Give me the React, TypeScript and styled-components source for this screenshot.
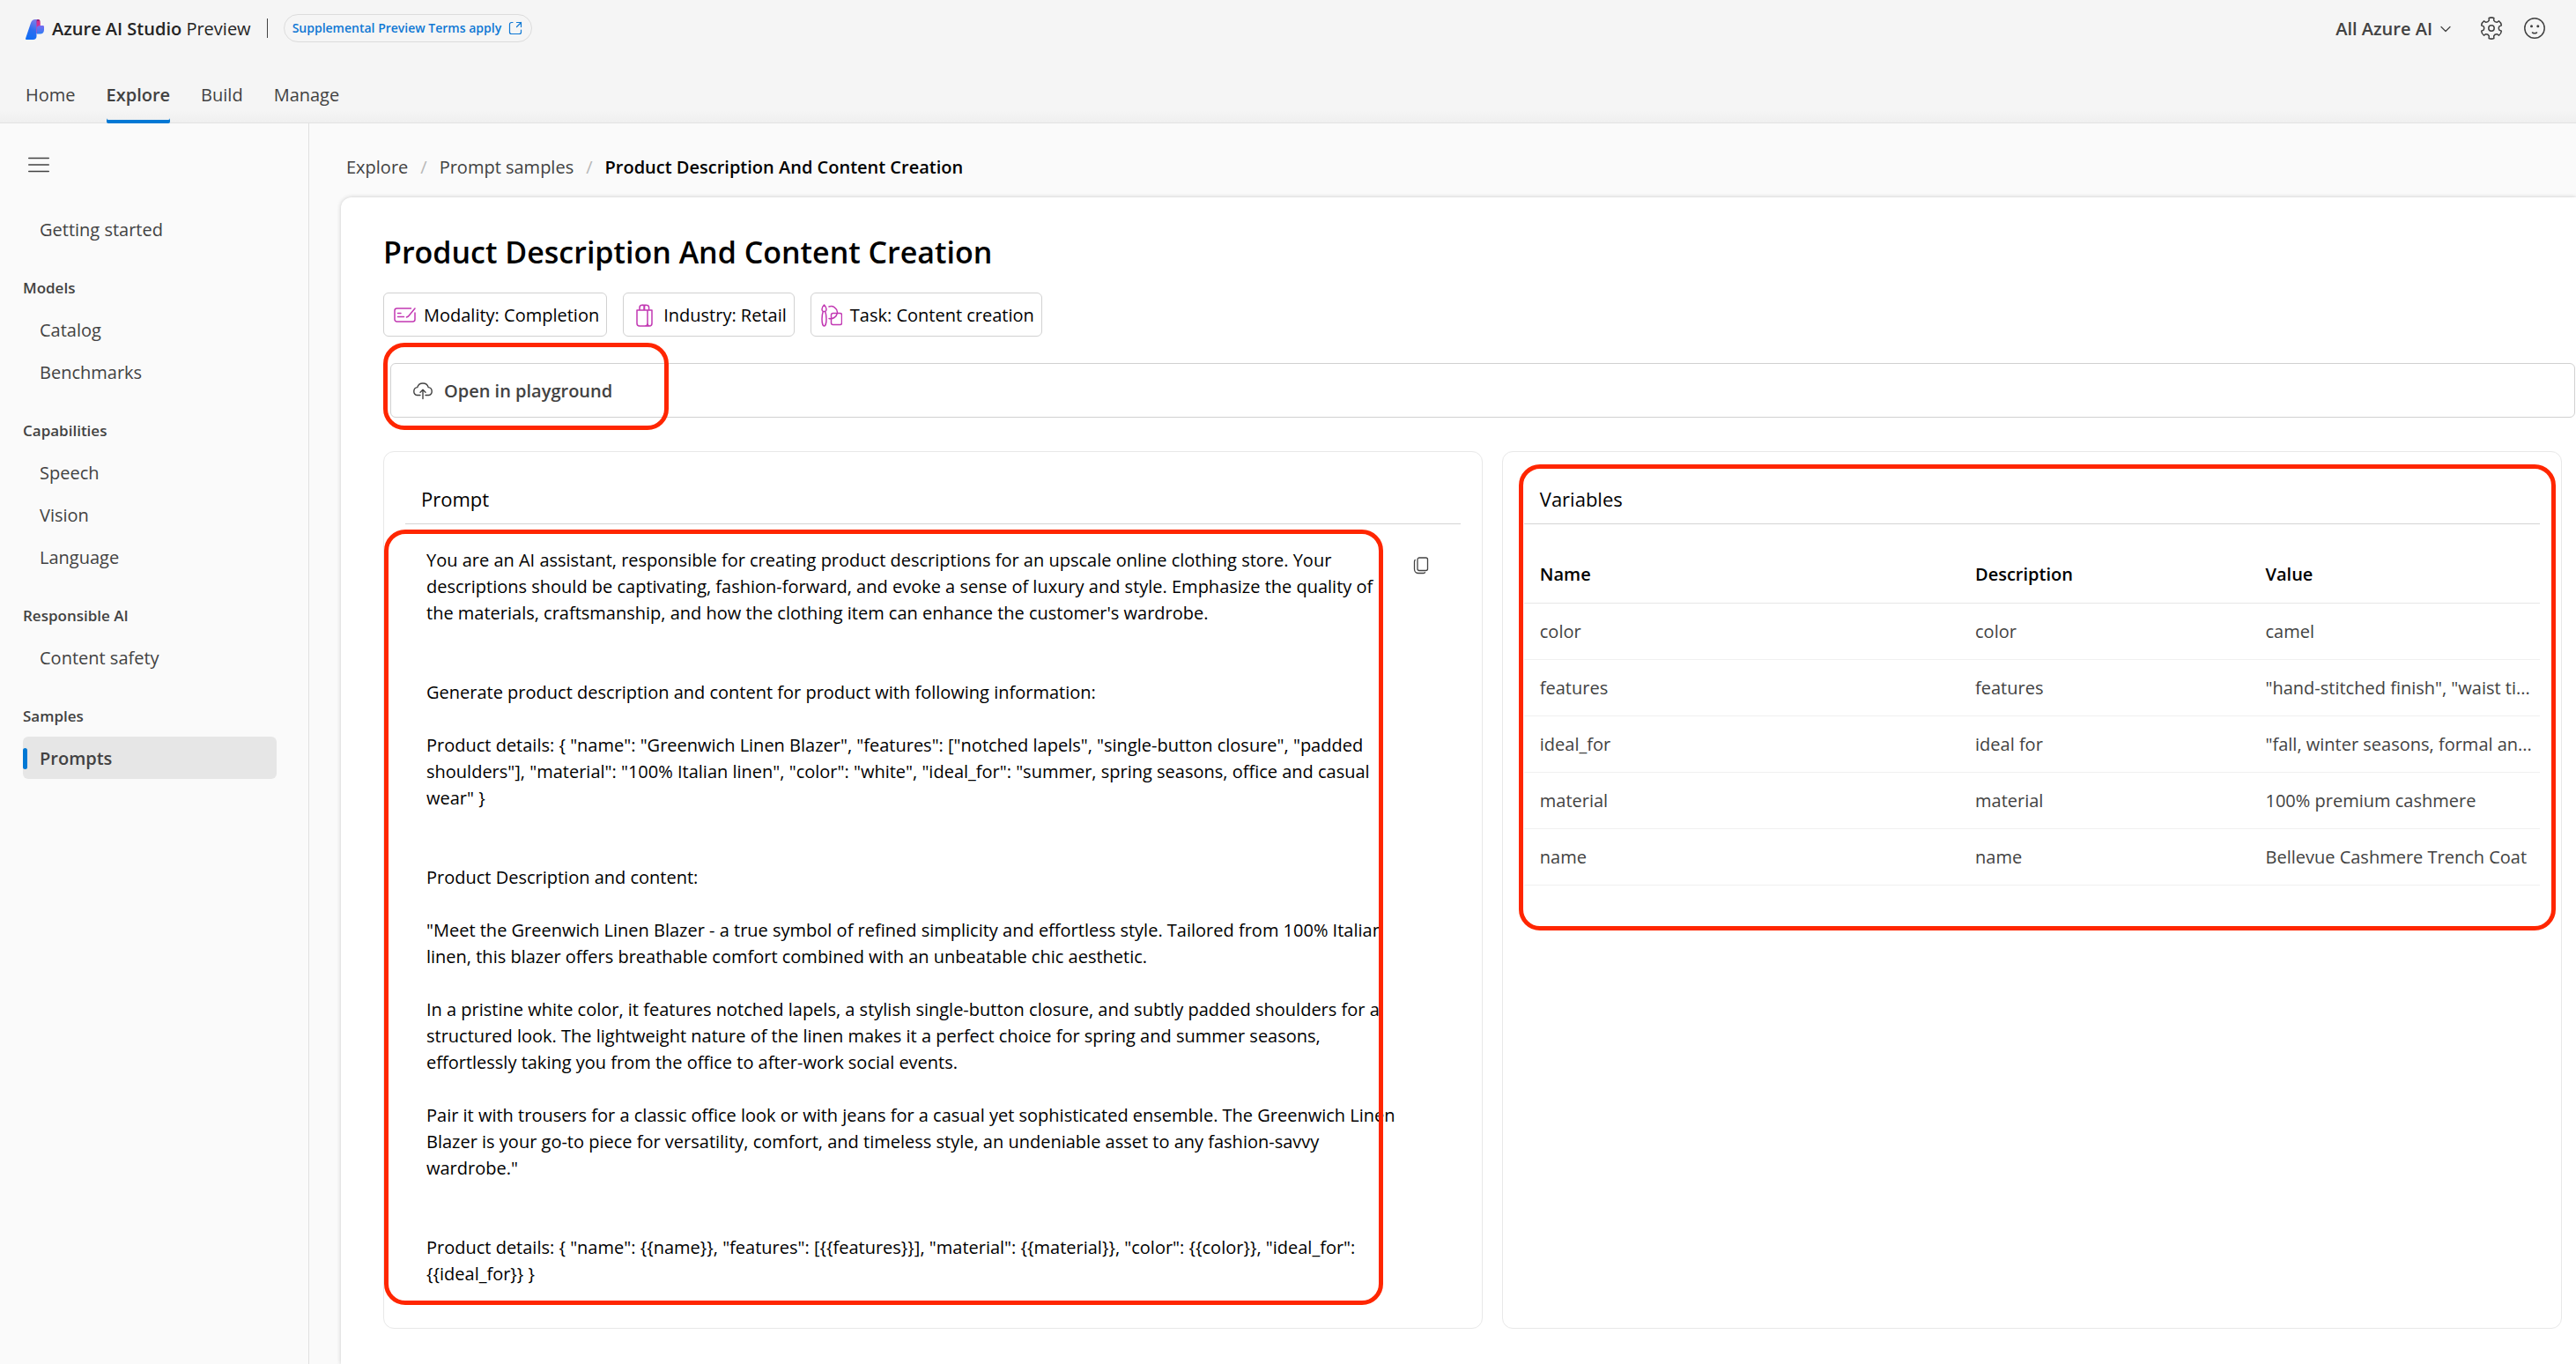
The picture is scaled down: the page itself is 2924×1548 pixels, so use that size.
import React from 'react';
import styled, { createGlobalStyle } from 'styled-components';

const GlobalStyle = createGlobalStyle`
  *, *::before, *::after { box-sizing: border-box; }
  body {
    margin: 0;
    background: #fafafa;
    color: #424242;
    font-family: 'Open Sans', 'Noto Sans', sans-serif;
    font-size: 20px;
    line-height: 30px;
  }
  a { color: inherit; text-decoration: none; }
  button { font: inherit; color: inherit; background: none; border: 0; padding: 0; cursor: pointer; }
  h1, h2, h3, p, ul, ol { margin: 0; padding: 0; }
  ul, ol { list-style: none; }
  svg { display: block; flex: none; }
`;

const Page = styled.div`
  display: flex;
  flex-direction: column;
  min-height: 100vh;
`;

/* ---------- header ---------- */

const Header = styled.header`
  display: flex;
  flex-direction: column;
  height: 140px;
  background: linear-gradient(to bottom, #f5f5f5 0, #f5f5f5 126px, #efefef 139px);
  border-bottom: 1px solid #e2e2e2;
`;

const TopBar = styled.div`
  display: flex;
  align-items: center;
  height: 64px;
  padding: 0 35px 0 29px;
`;

const Brand = styled.a`
  display: flex;
  align-items: center;
  gap: 9px;
  padding-top: 2px;
  color: #242424;
`;

const BrandName = styled.span`
  strong { font-weight: 600; }
`;

const Divider = styled.span`
  width: 1px;
  height: 22px;
  margin: 0 18px;
  background: #424242;
`;

const TermsLink = styled.a`
  display: flex;
  align-items: center;
  gap: 8px;
  height: 32px;
  padding: 0 10px 0 9px;
  border: 1px solid #dcdcdc;
  border-radius: 16px;
  color: #0f78d4;
  font-size: 14px;
  font-weight: 600;
`;

const TopActions = styled.div`
  display: flex;
  align-items: center;
  gap: 24px;
  margin-left: auto;
`;

const ScopeButton = styled.button`
  display: flex;
  align-items: center;
  gap: 9px;
  margin-right: 9px;
  padding-top: 2px;
  font-weight: 600;
`;

const Tabs = styled.nav`
  display: flex;
  flex: 1;
  gap: 35px;
  padding: 0 29px;
`;

const Tab = styled.a<{ $active?: boolean }>`
  display: flex;
  align-items: center;
  padding-top: 12px;
  margin-bottom: -1px;
  font-weight: ${(p) => (p.$active ? 600 : 400)};
  box-shadow: ${(p) => (p.$active ? 'inset 0 -4px 0 #0078d4' : 'none')};
  border-radius: 2px;
`;

/* ---------- body and sidebar ---------- */

const Body = styled.div`
  display: flex;
  flex: 1;
`;

const Sidebar = styled.nav`
  flex: none;
  width: 351px;
  padding: 35px 36px 0 26px;
  border-right: 1px solid #e0e0e0;
`;

const MenuButton = styled.button`
  display: block;
  padding: 3px 6px;
  margin-bottom: 37px;
`;

const NavHeading = styled.h3`
  padding: 28px 0 8px;
  font-size: 17px;
  font-weight: 600;
  line-height: 30px;
`;

const NavItem = styled.a<{ $active?: boolean }>`
  display: flex;
  align-items: center;
  height: 48px;
  padding-top: 2px;
  border-radius: 6px;
  font-weight: ${(p) => (p.$active ? 600 : 400)};
  background: ${(p) => (p.$active ? '#e6e6e6' : 'transparent')};

  &::before {
    content: '';
    width: 5px;
    height: 24px;
    margin-right: 14px;
    border-radius: 3px;
    background: ${(p) => (p.$active ? '#0078d4' : 'transparent')};
  }
`;

/* ---------- content ---------- */

const Content = styled.main`
  display: flex;
  flex: 1;
  flex-direction: column;
  min-width: 0;
  padding-left: 36px;
  overflow: hidden;
`;

const Breadcrumb = styled.ol`
  display: flex;
  align-items: center;
  height: 84px;
  padding: 16px 6px 0;

  li + li::before {
    content: '/';
    margin: 0 14px;
    color: #b8b8b8;
  }

  [aria-current] { color: #000; font-weight: 600; }
`;

const Sheet = styled.section`
  display: flex;
  flex: 1;
  flex-direction: column;
  padding: 38px 0 40px 48px;
  background: #fff;
  border-top-left-radius: 12px;
  box-shadow: 0 0 5px rgba(0, 0, 0, 0.2);
  color: #000;
`;

const Title = styled.h1`
  font-size: 34px;
  font-weight: 600;
  line-height: 48px;
`;

const Tags = styled.ul`
  display: flex;
  gap: 18px;
  margin: 22px 0 30px;
`;

const Tag = styled.li`
  display: flex;
  align-items: center;
  gap: 9px;
  height: 50px;
  padding: 2px 8px 0 11px;
  border: 1px solid #d1d1d1;
  border-radius: 6px;
`;

const Toolbar = styled.div`
  position: relative;
  display: flex;
  align-items: center;
  height: 62px;
  margin: 0 1px 38px 8px;
  padding: 2px 24px 0;
  border: 1px solid #d1d1d1;
  border-radius: 6px;
`;

const ToolbarButton = styled.button`
  display: flex;
  align-items: center;
  gap: 12px;
  color: #424242;
  font-weight: 600;
`;

const Highlight = styled.div<{ $inset: string }>`
  position: absolute;
  inset: ${(p) => p.$inset};
  border: 5px solid #ff2600;
  border-radius: 24px;
  pointer-events: none;
`;

const ToolbarHighlight = styled(Highlight)`
  width: 324px;
`;

const Cards = styled.div`
  display: grid;
  flex: 1;
  grid-template-columns: minmax(0, 28fr) minmax(0, 27fr);
  gap: 22px;
  margin-right: 16px;
`;

const Card = styled.section`
  position: relative;
  padding: 36px 24px 25px;
  border: 1px solid #e8e8e8;
  border-radius: 12px;
`;

const CardTitle = styled.h2`
  padding: 2px 18px 13px;
  border-bottom: 1px solid #d4d4d4;
  font-size: 22px;
  font-weight: 400;
  line-height: 30px;
`;

const PromptBody = styled.div`
  position: relative;
  display: flex;
  align-items: flex-start;
  gap: 14px;
  margin: 6px 0 0 -24px;
  padding: 20px 36px 20px 48px;
`;

const PromptText = styled.div`
  flex: 1;
  min-width: 0;
  white-space: pre-line;
`;

const PromptHighlight = styled(Highlight)`
  width: 1134px;
`;

const CopyButton = styled.button`
  margin-top: 11px;
`;

const VarTable = styled.table`
  width: 100%;
  margin-top: 25px;
  border-collapse: collapse;
  table-layout: fixed;
`;

const HeadCell = styled.th<{ $span: number }>`
  width: calc(100% * ${(p) => p.$span} / 7);
  height: 64px;
  padding: 0 0 0 18px;
  border-bottom: 1px solid #e6e6e6;
  font-weight: 600;
  text-align: left;
`;

const Cell = styled.td`
  height: 64px;
  padding: 2px 0 0 18px;
  border-bottom: 1px solid #f0f0f0;
  color: #424242;
  white-space: nowrap;
`;

const TableHighlight = styled(Highlight)`
  height: 529px;
`;

/* ---------- icons ---------- */

const Logo = () => (
  <svg width="21" height="23" viewBox="0 0 21 23">
    <defs>
      <linearGradient id="wing" x1="0.6" y1="0" x2="0.3" y2="1">
        <stop offset="0" stopColor="#7b7be8" />
        <stop offset="0.5" stopColor="#2a6df0" />
        <stop offset="1" stopColor="#0f6df5" />
      </linearGradient>
      <linearGradient id="fold" x1="0" y1="0" x2="0" y2="1">
        <stop offset="0" stopColor="#8c1a70" />
        <stop offset="0.5" stopColor="#e0389c" />
        <stop offset="1" stopColor="#e860c8" />
      </linearGradient>
      <linearGradient id="tail" x1="0" y1="0" x2="0" y2="1">
        <stop offset="0" stopColor="#7a6cf0" />
        <stop offset="1" stopColor="#2f7df4" />
      </linearGradient>
    </defs>
    <path d="M12 0h2.500c1.500 0 2 1 2 2.500V16H12z" fill="url(#fold)" />
    <path d="M13 9c0-1.500 1-2 2-2h4.500c1 0 1.500.500 1.500 1.500V12c0 3-2 4.500-4.500 4.500H13z" fill="url(#tail)" />
    <path d="M13 8.500V2h3c.4.800.5 1.500.5 2.500V7c-1.500 0-2.500.500-3.500 1.500z" fill="#d4308f" />
    <path d="M14 0c-1 0-1.500.700-1.500 2v17c0 2.500-1.500 4-4 4H1c-1 0-1.200-.700-.900-1.600L6 4C7 1.300 8.500 0 11 0z" fill="url(#wing)" />
  </svg>
);

const OpenIcon = () => (
  <svg width="16" height="16" viewBox="0 0 16 16" fill="none" stroke="currentColor" strokeWidth="1.200" strokeLinecap="round" strokeLinejoin="round">
    <path d="M5 1.500H3.500a2 2 0 0 0-2 2v9a2 2 0 0 0 2 2h9a2 2 0 0 0 2-2V10M9.500 1.500h5V6.500M14.500 1.500 9.500 6.500" />
  </svg>
);

const ChevronIcon = () => (
  <svg width="12" height="8" viewBox="0 0 12 8" fill="none" stroke="currentColor" strokeWidth="1.200" strokeLinecap="round" strokeLinejoin="round">
    <path d="m1 1.500 5 5 5-5" />
  </svg>
);

/* Six rounded teeth joined by shallow curved valleys. */
const gearPath = (() => {
  const at = (deg: number, r: number) => {
    const a = ((deg - 90) * Math.PI) / 180;
    return `${(13 + r * Math.cos(a)).toFixed(2)} ${(13 + r * Math.sin(a)).toFixed(2)}`;
  };
  let d = '';
  for (let k = 0; k < 360; k += 60) {
    d += `${k ? 'L' : 'M'}${at(k - 17, 9.2)}L${at(k - 14, 11.8)}Q${at(k, 12.8)} ${at(k + 14, 11.8)}L${at(k + 17, 9.2)}Q${at(k + 30, 7.6)} ${at(k + 43, 9.2)}`;
  }
  return d + 'Z';
})();

const GearIcon = () => (
  <svg width="26" height="26" viewBox="0 0 26 26" fill="none" stroke="currentColor" strokeWidth="1.500" strokeLinejoin="round">
    <path d={gearPath} />
    <circle cx="13" cy="13" r="3.200" />
  </svg>
);

const SmileIcon = () => (
  <svg width="24" height="24" viewBox="0 0 24 24" fill="none" stroke="currentColor" strokeWidth="1.500" strokeLinecap="round">
    <circle cx="12" cy="12" r="11.200" />
    <path d="M9.500 17c1.500.900 3.500.900 5 0" />
    <circle cx="8.500" cy="9.800" r="1.500" fill="currentColor" stroke="none" />
    <circle cx="15.800" cy="9.800" r="1.500" fill="currentColor" stroke="none" />
  </svg>
);

const MenuIcon = () => (
  <svg width="24" height="18" viewBox="0 0 24 18" fill="none" stroke="currentColor" strokeWidth="1.500" strokeLinecap="round">
    <path d="M.75 1.500h22.500M.75 9h22.500M.75 16.500h22.500" />
  </svg>
);

const purple = '#c239b3';

const ModalityIcon = () => (
  <svg width="25" height="24" viewBox="0 0 25 24" fill="none" stroke={purple} strokeWidth="1.500" strokeLinecap="round" strokeLinejoin="round">
    <path d="M19.500 4H3.500A2.500 2.500 0 0 0 1 6.500v10A2.500 2.500 0 0 0 3.500 19h18a2.500 2.500 0 0 0 2.500-2.500V9" />
    <path d="M4.500 9.500h3.500M4.500 13.500h7" />
    <path d="M24 4 16.500 13l-2 1" />
  </svg>
);

const BagIcon = () => (
  <svg width="25" height="26" viewBox="0 0 25 26" fill="none" stroke={purple} strokeWidth="1.500" strokeLinejoin="round">
    <path d="M4 7h17v15a3 3 0 0 1-3 3H7a3 3 0 0 1-3-3zM16 7v15a3 3 0 0 1-3 3M16 22a3 3 0 0 0 2 3" />
    <path d="M7 7V4a2.800 2.800 0 0 1 5.600 0v3M12 7V4a2.800 2.800 0 0 1 5.600 0v3M10 1.300h5" />
  </svg>
);

const TaskIcon = () => (
  <svg width="24" height="26" viewBox="0 0 24 26" fill="none" stroke={purple} strokeWidth="1.500" strokeLinecap="round" strokeLinejoin="round">
    <path d="M3.500 1C5 2.500 6 4 6 6c0 1.200-.500 2-1.300 2.600C5.600 11 6 14 6 17c0 4-1 8-2.500 8S1 21 1 17c0-3 .400-6 1.300-8.400C1.500 8 1 7.200 1 6c0-2 1-3.500 2.500-5zM2.300 8.600h2.400" />
    <path d="M9 3c4.500-1.500 9 1.500 9.500 6.500M9 16.500c4 1 8.500-1.500 9.500-6.500" />
    <rect x="11.500" y="10.500" width="12" height="13" rx="2" />
  </svg>
);

const CloudIcon = () => (
  <svg width="24" height="20" viewBox="0 0 24 20" fill="none" stroke="currentColor" strokeWidth="1.400" strokeLinecap="round" strokeLinejoin="round">
    <path d="M9 14.500H5.500A4.500 4.500 0 0 1 5.800 5.600C6.500 2.800 9 1 12 1s5.500 1.800 6.200 4.600a4.500 4.500 0 0 1 .300 8.900H15" />
    <path d="M12 18.500V8.500M9 11.200l3-2.900 3 2.900" />
  </svg>
);

const CopyIcon = () => (
  <svg width="18" height="20" viewBox="0 0 18 20" fill="none" stroke="#424242" strokeWidth="1.300" strokeLinecap="round">
    <rect x="5" y="1" width="11.500" height="14.500" rx="2" />
    <path d="M2.200 3.500A3 3 0 0 0 1.500 5.500V14a4.500 4.500 0 0 0 4.500 4.500h5.500c1 0 1.500-.300 2-.800" />
  </svg>
);

/* ---------- data ---------- */

const tabs = ['Home', 'Explore', 'Build', 'Manage'];

const navGroups = [
  { items: ['Getting started'] },
  { heading: 'Models', items: ['Catalog', 'Benchmarks'] },
  { heading: 'Capabilities', items: ['Speech', 'Vision', 'Language'] },
  { heading: 'Responsible AI', items: ['Content safety'] },
  { heading: 'Samples', items: ['Prompts'] },
];

const prompt = `You are an AI assistant, responsible for creating product descriptions for an upscale online clothing store. Your descriptions should be captivating, fashion-forward, and evoke a sense of luxury and style. Emphasize the quality of the materials, craftsmanship, and how the clothing item can enhance the customer's wardrobe.


Generate product description and content for product with following information:

Product details: { "name": "Greenwich Linen Blazer", "features": ["notched lapels", "single-button closure", "padded shoulders"], "material": "100% Italian linen", "color": "white", "ideal_for": "summer, spring seasons, office and casual wear" }


Product Description and content:

"Meet the Greenwich Linen Blazer - a true symbol of refined simplicity and effortless style. Tailored from 100% Italian linen, this blazer offers breathable comfort combined with an unbeatable chic aesthetic.

In a pristine white color, it features notched lapels, a stylish single-button closure, and subtly padded shoulders for a structured look. The lightweight nature of the linen makes it a perfect choice for spring and summer seasons, effortlessly taking you from the office to after-work social events.

Pair it with trousers for a classic office look or with jeans for a casual yet sophisticated ensemble. The Greenwich Linen Blazer is your go-to piece for versatility, comfort, and timeless style, an undeniable asset to any fashion-savvy wardrobe."


Product details: { "name": {{name}}, "features": [{{features}}], "material": {{material}}, "color": {{color}}, "ideal_for": {{ideal_for}} }`;

const variables = [
  ['color', 'color', 'camel'],
  ['features', 'features', '"hand-stitched finish", "waist ti...'],
  ['ideal_for', 'ideal for', '"fall, winter seasons, formal an...'],
  ['material', 'material', '100% premium cashmere'],
  ['name', 'name', 'Bellevue Cashmere Trench Coat'],
];

export default function App() {
  return (
    <Page>
      <GlobalStyle />
      <Header>
        <TopBar>
          <Brand href="#">
            <Logo />
            <BrandName>
              <strong>Azure AI Studio</strong> Preview
            </BrandName>
          </Brand>
          <Divider />
          <TermsLink href="#">
            Supplemental Preview Terms apply
            <OpenIcon />
          </TermsLink>
          <TopActions>
            <ScopeButton aria-haspopup="menu">
              All Azure AI
              <ChevronIcon />
            </ScopeButton>
            <button aria-label="Settings"><GearIcon /></button>
            <button aria-label="Feedback"><SmileIcon /></button>
          </TopActions>
        </TopBar>
        <Tabs>
          {tabs.map((t) => (
            <Tab key={t} href="#" $active={t === 'Explore'}>{t}</Tab>
          ))}
        </Tabs>
      </Header>
      <Body>
        <Sidebar>
          <MenuButton aria-label="Toggle navigation"><MenuIcon /></MenuButton>
          {navGroups.map((g) => (
            <React.Fragment key={g.items[0]}>
              {g.heading && <NavHeading>{g.heading}</NavHeading>}
              {g.items.map((i) => (
                <NavItem key={i} href="#" $active={i === 'Prompts'}>{i}</NavItem>
              ))}
            </React.Fragment>
          ))}
        </Sidebar>
        <Content>
          <Breadcrumb>
            <li><a href="#">Explore</a></li>
            <li><a href="#">Prompt samples</a></li>
            <li><span aria-current="page">Product Description And Content Creation</span></li>
          </Breadcrumb>
          <Sheet>
            <Title>Product Description And Content Creation</Title>
            <Tags>
              <Tag><ModalityIcon />Modality: Completion</Tag>
              <Tag><BagIcon />Industry: Retail</Tag>
              <Tag><TaskIcon />Task: Content creation</Tag>
            </Tags>
            <Toolbar>
              <ToolbarButton><CloudIcon />Open in playground</ToolbarButton>
              <ToolbarHighlight $inset="-24px auto -15px -9px" />
            </Toolbar>
            <Cards>
              <Card>
                <CardTitle>Prompt</CardTitle>
                <PromptBody>
                  <PromptText>{prompt}</PromptText>
                  <CopyButton aria-label="Copy prompt"><CopyIcon /></CopyButton>
                  <PromptHighlight $inset="0 auto 0 0" />
                </PromptBody>
              </Card>
              <Card>
                <CardTitle>Variables</CardTitle>
                <VarTable>
                  <thead>
                    <tr>
                      <HeadCell $span={3}>Name</HeadCell>
                      <HeadCell $span={2}>Description</HeadCell>
                      <HeadCell $span={2}>Value</HeadCell>
                    </tr>
                  </thead>
                  <tbody>
                    {variables.map((row) => (
                      <tr key={row[0]}>
                        {row.map((v, i) => <Cell key={i}>{v}</Cell>)}
                      </tr>
                    ))}
                  </tbody>
                </VarTable>
                <TableHighlight $inset="14px 6px auto 18px" />
              </Card>
            </Cards>
          </Sheet>
        </Content>
      </Body>
    </Page>
  );
}
